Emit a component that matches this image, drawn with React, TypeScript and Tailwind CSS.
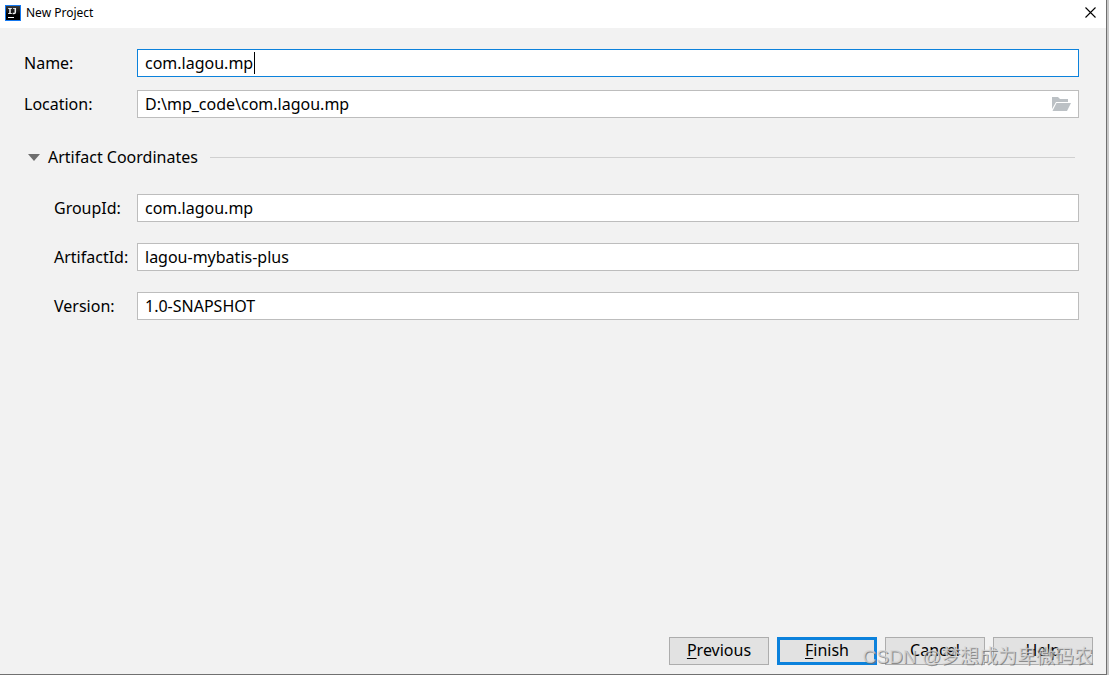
import { useState } from 'react';
import type { ReactNode } from 'react';

type FieldProps = {
  id: string;
  label: string;
  value: string;
  onChange: (value: string) => void;
  nested?: boolean;
  active?: boolean;
  children?: ReactNode;
};

function Field({ id, label, value, onChange, nested, active, children }: FieldProps) {
  return (
    <div className="flex items-center">
      <label htmlFor={id} className={`w-[113px] shrink-0 whitespace-nowrap ${nested ? 'pl-[30px]' : ''}`}>
        {label}
      </label>
      <div className="relative flex-1">
        <input
          id={id}
          type="text"
          value={value}
          spellCheck={false}
          onChange={e => onChange(e.target.value)}
          className={`block h-7 w-full border bg-white px-[7px] outline-none ${active ? 'border-[#0c82dc]' : 'border-[#bdbdbd]'}`}
        />
        {children}
      </div>
    </div>
  );
}

function AppLogo() {
  return (
    <svg width="16" height="16" viewBox="0 0 16 16" aria-hidden="true">
      <defs>
        <linearGradient id="logo-fill" x1="0" y1="0" x2="0" y2="1">
          <stop offset="0" stopColor="#3a3a3a" />
          <stop offset="0.6" stopColor="#000" />
        </linearGradient>
      </defs>
      <rect width="16" height="16" fill="#1478f0" />
      <rect x="1" y="1" width="14" height="14" fill="url(#logo-fill)" />
      <path d="M3 3.5h4M3 8.5h4M8 3.5h3" stroke="#c8c8c8" fill="none" />
      <path d="M5 3v6M10.3 3v4.2q0 1.3-1.3 1.3h-1.4" stroke="#f0f0f0" strokeWidth="1.5" fill="none" />
      <path d="M3 12.5h6" stroke="#fff" />
    </svg>
  );
}

const buttons = [
  { key: 'P', rest: 'revious', primary: false },
  { key: 'F', rest: 'inish', primary: true },
  { key: '', rest: 'Cancel', primary: false },
  { key: '', rest: 'Help', primary: false },
];

export default function App() {
  const [name, setName] = useState('com.lagou.mp');
  const [location, setLocation] = useState('D:\\mp_code\\com.lagou.mp');
  const [groupId, setGroupId] = useState('com.lagou.mp');
  const [artifactId, setArtifactId] = useState('lagou-mybatis-plus');
  const [version, setVersion] = useState('1.0-SNAPSHOT');
  const [open, setOpen] = useState(true);

  return (
    <div className="min-h-screen flex bg-[#c9c9c9] pr-[2px] font-['Noto_Sans','Noto_Sans_CJK_SC',sans-serif] text-base leading-6 text-black">
      <div className="relative flex flex-1 flex-col border-r border-b border-[#707070] bg-[#f2f2f2]">
        {/* Title bar */}
        <header className="flex h-7 items-center bg-white pl-[5px] pr-[10px] pb-[3px]">
          <AppLogo />
          <h1 className="ml-[5px] flex-1 text-xs">New Project</h1>
          <button type="button" aria-label="Close">
            <svg width="11" height="11" viewBox="0 0 11 11" fill="none" stroke="#000" strokeWidth="1.1">
              <path d="M0.5 0.5l10 10M10.5 0.5l-10 10" />
            </svg>
          </button>
        </header>

        <main className="flex-1 pl-6 pr-[27px] pt-[21px]">
          <div className="flex flex-col gap-[13px]">
            <Field id="name" label="Name:" value={name} onChange={setName} active>
              {/* Text cursor */}
              <span className="absolute left-[117px] top-[3px] h-[22px] w-px bg-black" />
            </Field>
            <Field id="location" label="Location:" value={location} onChange={setLocation}>
              <button type="button" aria-label="Browse" className="absolute right-2 top-[7px]">
                <svg width="19" height="14" viewBox="0 0 19 14" fill="#bcc1c5">
                  <path d="M0 0h6l2 2h8v3H4L0 12z" />
                  <path d="M4.5 6H19l-4 8H0.5z" />
                </svg>
              </button>
            </Field>
          </div>

          <button
            type="button"
            aria-expanded={open}
            onClick={() => setOpen(!open)}
            className="mt-[27px] flex w-full items-center pl-1 pr-1"
          >
            <svg width="12" height="7" viewBox="0 0 12 7" fill="#6e6e6e" className={open ? '' : '-rotate-90'}>
              <path d="M0 0h12L6 7z" />
            </svg>
            <span className="ml-2">Artifact Coordinates</span>
            <span className="ml-3 h-px flex-1 bg-[#d0d0d0]" />
          </button>

          {open && (
            <div className="mt-[25px] flex flex-col gap-[21px]">
              <Field id="group-id" label="GroupId:" value={groupId} onChange={setGroupId} nested />
              <Field id="artifact-id" label="ArtifactId:" value={artifactId} onChange={setArtifactId} nested />
              <Field id="version" label="Version:" value={version} onChange={setVersion} nested />
            </div>
          )}
        </main>

        <footer className="flex justify-end gap-2 pr-[13px] pb-[9px]">
          {buttons.map(({ key, rest, primary }) => (
            <button
              key={rest}
              type="button"
              className={`flex h-7 w-[100px] items-center justify-center bg-[#e2e2e2] pb-[2px] ${primary ? 'border-[3px] border-[#0c82dc]' : 'border border-[#adadad]'}`}
            >
              {key && <span className="underline underline-offset-2">{key}</span>}
              {rest}
            </button>
          ))}
        </footer>

        {/* Watermark */}
        <p className="pointer-events-none absolute right-[13px] bottom-[3px] whitespace-nowrap font-['Liberation_Sans','Noto_Sans_CJK_SC',sans-serif] text-[19px] leading-7 text-[#d4d4d4]/80 [text-shadow:1px_1px_0_#707070c0]">
          CSDN @梦想成为卑微码农
        </p>
      </div>
    </div>
  );
}
